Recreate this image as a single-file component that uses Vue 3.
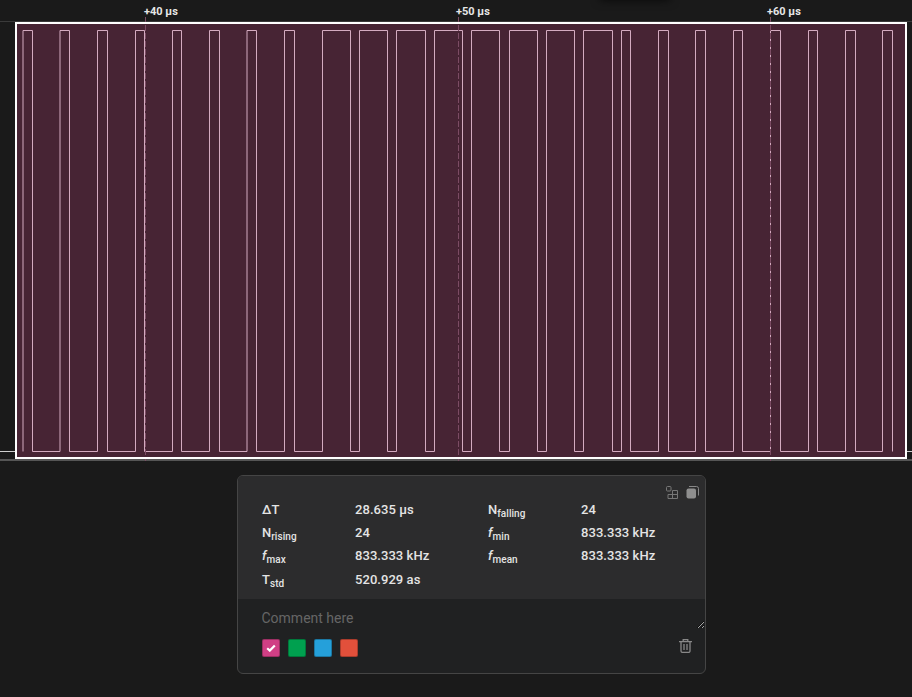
<script setup>
const edges = [
  [23, 32.5], [60, 69.5], [97.5, 107.5], [135.5, 144.5], [172.5, 181.5], [209.5, 219.5],
  [247, 256.5], [284.5, 294.5], [322.5, 350.5], [359.5, 387.5], [396.5, 425.5], [434.5, 462.5],
  [471.5, 499.5], [509.5, 537.5], [546.5, 574.5], [583.5, 612.5], [621.5, 630.5], [658.5, 668.5],
  [695.5, 705.5], [733.5, 742.5], [770.5, 780.5], [808.5, 817.5], [845.5, 855.5], [882.5, 892.5],
];

const top = 30.5;
const low = 451.5;

let trace = "";
edges.forEach(([up, down], i) => {
  trace += `${i === 0 ? "M" : " L"}${up} ${low} L${up} ${top} L${down} ${top} L${down} ${low}`;
});

const marks = [
  { x: 145.5, left: 144, label: "+40 µs" },
  { x: 458.5, left: 456, label: "+50 µs" },
  { x: 770.5, left: 767, label: "+60 µs" },
];

const stats = [
  { name: "ΔT", value: "28.635 µs" },
  { name: "N", sub: "falling", value: "24" },
  { name: "N", sub: "rising", value: "24" },
  { name: "f", italic: true, sub: "min", value: "833.333 kHz" },
  { name: "f", italic: true, sub: "max", value: "833.333 kHz" },
  { name: "f", italic: true, sub: "mean", value: "833.333 kHz" },
  { name: "T", sub: "std", value: "520.929 as" },
];

const colors = ["#d03f85", "#00a04f", "#25a0da", "#e2503b"];
</script>

<template>
  <main class="page">
    <div class="toolbar-shadow"></div>
    <section class="plot">
      <svg class="wave" width="912" height="462" viewBox="0 0 912 462">
        <rect x="0" y="21" width="912" height="1" fill="#3a3a3a" />
        <rect x="0" y="459" width="912" height="2" fill="#555" />
        <path d="M0 451.5H15M907 451.5H912" stroke="#cfcfcf" stroke-width="1" />
        <rect x="16" y="23" width="890" height="435" fill="#472434" />
        <path :d="trace" fill="none" stroke="#d4abc0" stroke-width="1" />
        <line
          v-for="m in marks"
          :key="m.x"
          :x1="m.x"
          :x2="m.x"
          y1="17"
          y2="461"
          stroke="#7c4c64"
          stroke-width="1"
          stroke-dasharray="6 2"
        />
        <rect x="16" y="23" width="890" height="435" fill="none" stroke="#fff" stroke-width="2" />
      </svg>
      <span v-for="m in marks" :key="m.label" class="mark" :style="{ left: m.left + 'px' }">{{ m.label }}</span>
    </section>

    <section class="panel">
      <div class="panel-top">
        <div class="actions">
          <svg width="13" height="13" viewBox="0 0 13 13" fill="none" stroke="#777" stroke-width="1">
            <rect x="1.5" y="0.5" width="4.5" height="4.5" rx="1" />
            <path d="M7.5 4.5H12.5V12.5H3V8.5H12.5M7.5 4.5V12.5" />
          </svg>
          <svg width="13" height="13" viewBox="0 0 13 13">
            <path d="M3 0.5h7.5a2 2 0 0 1 2 2v7" fill="none" stroke="#888" stroke-width="1" />
            <rect x="0.5" y="2.5" width="9.5" height="10" rx="2" fill="#8f8f8f" />
          </svg>
        </div>
        <div class="stats">
          <div v-for="(s, i) in stats" :key="i" class="stat">
            <span class="name"><i v-if="s.italic">{{ s.name }}</i><template v-else>{{ s.name }}</template><sub v-if="s.sub">{{ s.sub }}</sub></span>
            <span class="value">{{ s.value }}</span>
          </div>
        </div>
      </div>
      <div class="panel-bottom">
        <textarea class="comment" placeholder="Comment here"></textarea>
        <div class="footer">
          <div class="swatches">
            <span v-for="(c, i) in colors" :key="c" class="swatch" :style="{ background: c }">
              <svg v-if="i === 0" width="10" height="8" viewBox="0 0 10 8">
                <path d="M1.2 4.2 3.8 6.6 8.8 1.4" fill="none" stroke="#fff" stroke-width="2.2" />
              </svg>
            </span>
          </div>
          <svg class="trash" width="13" height="14" viewBox="0 0 13 14" fill="none" stroke="#888" stroke-width="1.3">
            <path d="M0 2.6h13M4.2 2.6V0.7h4.6v1.9M2 2.6v9.4a1.4 1.4 0 0 0 1.4 1.4h6.2a1.4 1.4 0 0 0 1.4-1.4V2.6M5 5v6M8 5v6" />
          </svg>
        </div>
      </div>
    </section>
  </main>
</template>

<style scoped>
.page {
  position: relative;
  width: 912px;
  height: 697px;
  overflow: hidden;
  background: #1a1a1a;
  font-family: Roboto, "Liberation Sans", sans-serif;
}
.toolbar-shadow {
  position: absolute;
  left: 600px;
  top: -30px;
  width: 70px;
  height: 30px;
  box-shadow: 0 0 10px rgba(0, 0, 0, 0.7);
}
.plot {
  position: relative;
  height: 475px;
}
.wave {
  display: block;
}
.mark {
  position: absolute;
  top: 5px;
  font-size: 11px;
  line-height: 14px;
  font-weight: 700;
  color: #e6e6e6;
  white-space: nowrap;
}
.panel {
  width: 469px;
  height: 199px;
  margin-left: 237px;
  box-sizing: border-box;
  border: 1px solid #454545;
  border-radius: 6px;
  overflow: hidden;
  display: flex;
  flex-direction: column;
  background: #202122;
}
.panel-top {
  position: relative;
  height: 123px;
  box-sizing: border-box;
  padding: 21.5px 24px 0 24px;
  background: #2c2c2d;
}
.actions {
  position: absolute;
  top: 10px;
  right: 6px;
  display: flex;
  gap: 8px;
}
.stats {
  display: grid;
  grid-template-columns: 226px 1fr;
}
.stat {
  display: flex;
  height: 23.4px;
  align-items: center;
  font-size: 13px;
  font-weight: 500;
  color: #e4e4e4;
  letter-spacing: 0.05px;
}
.name {
  width: 93px;
}
.name sub {
  font-size: 10px;
  vertical-align: -2.5px;
  line-height: 0;
}
.panel-bottom {
  position: relative;
  flex: 1;
  padding: 0 0 0 23.5px;
}
.comment {
  display: block;
  width: 443.5px;
  height: 21px;
  box-sizing: border-box;
  margin-top: 9px;
  padding: 0;
  border: 0;
  outline: 0;
  resize: both;
  background: transparent;
  color: #e4e4e4;
  font-family: inherit;
  font-size: 14px;
  line-height: 20px;
}
.comment::placeholder {
  color: #666;
}
.footer {
  display: flex;
  align-items: flex-start;
  justify-content: space-between;
  margin-top: 10px;
  padding-right: 13px;
}
.swatches {
  display: flex;
  gap: 8px;
}
.swatch {
  display: flex;
  width: 18px;
  height: 18px;
  box-sizing: border-box;
  align-items: center;
  justify-content: center;
  border: 1px solid rgba(0, 0, 0, 0.25);
  border-radius: 2px;
}
</style>
